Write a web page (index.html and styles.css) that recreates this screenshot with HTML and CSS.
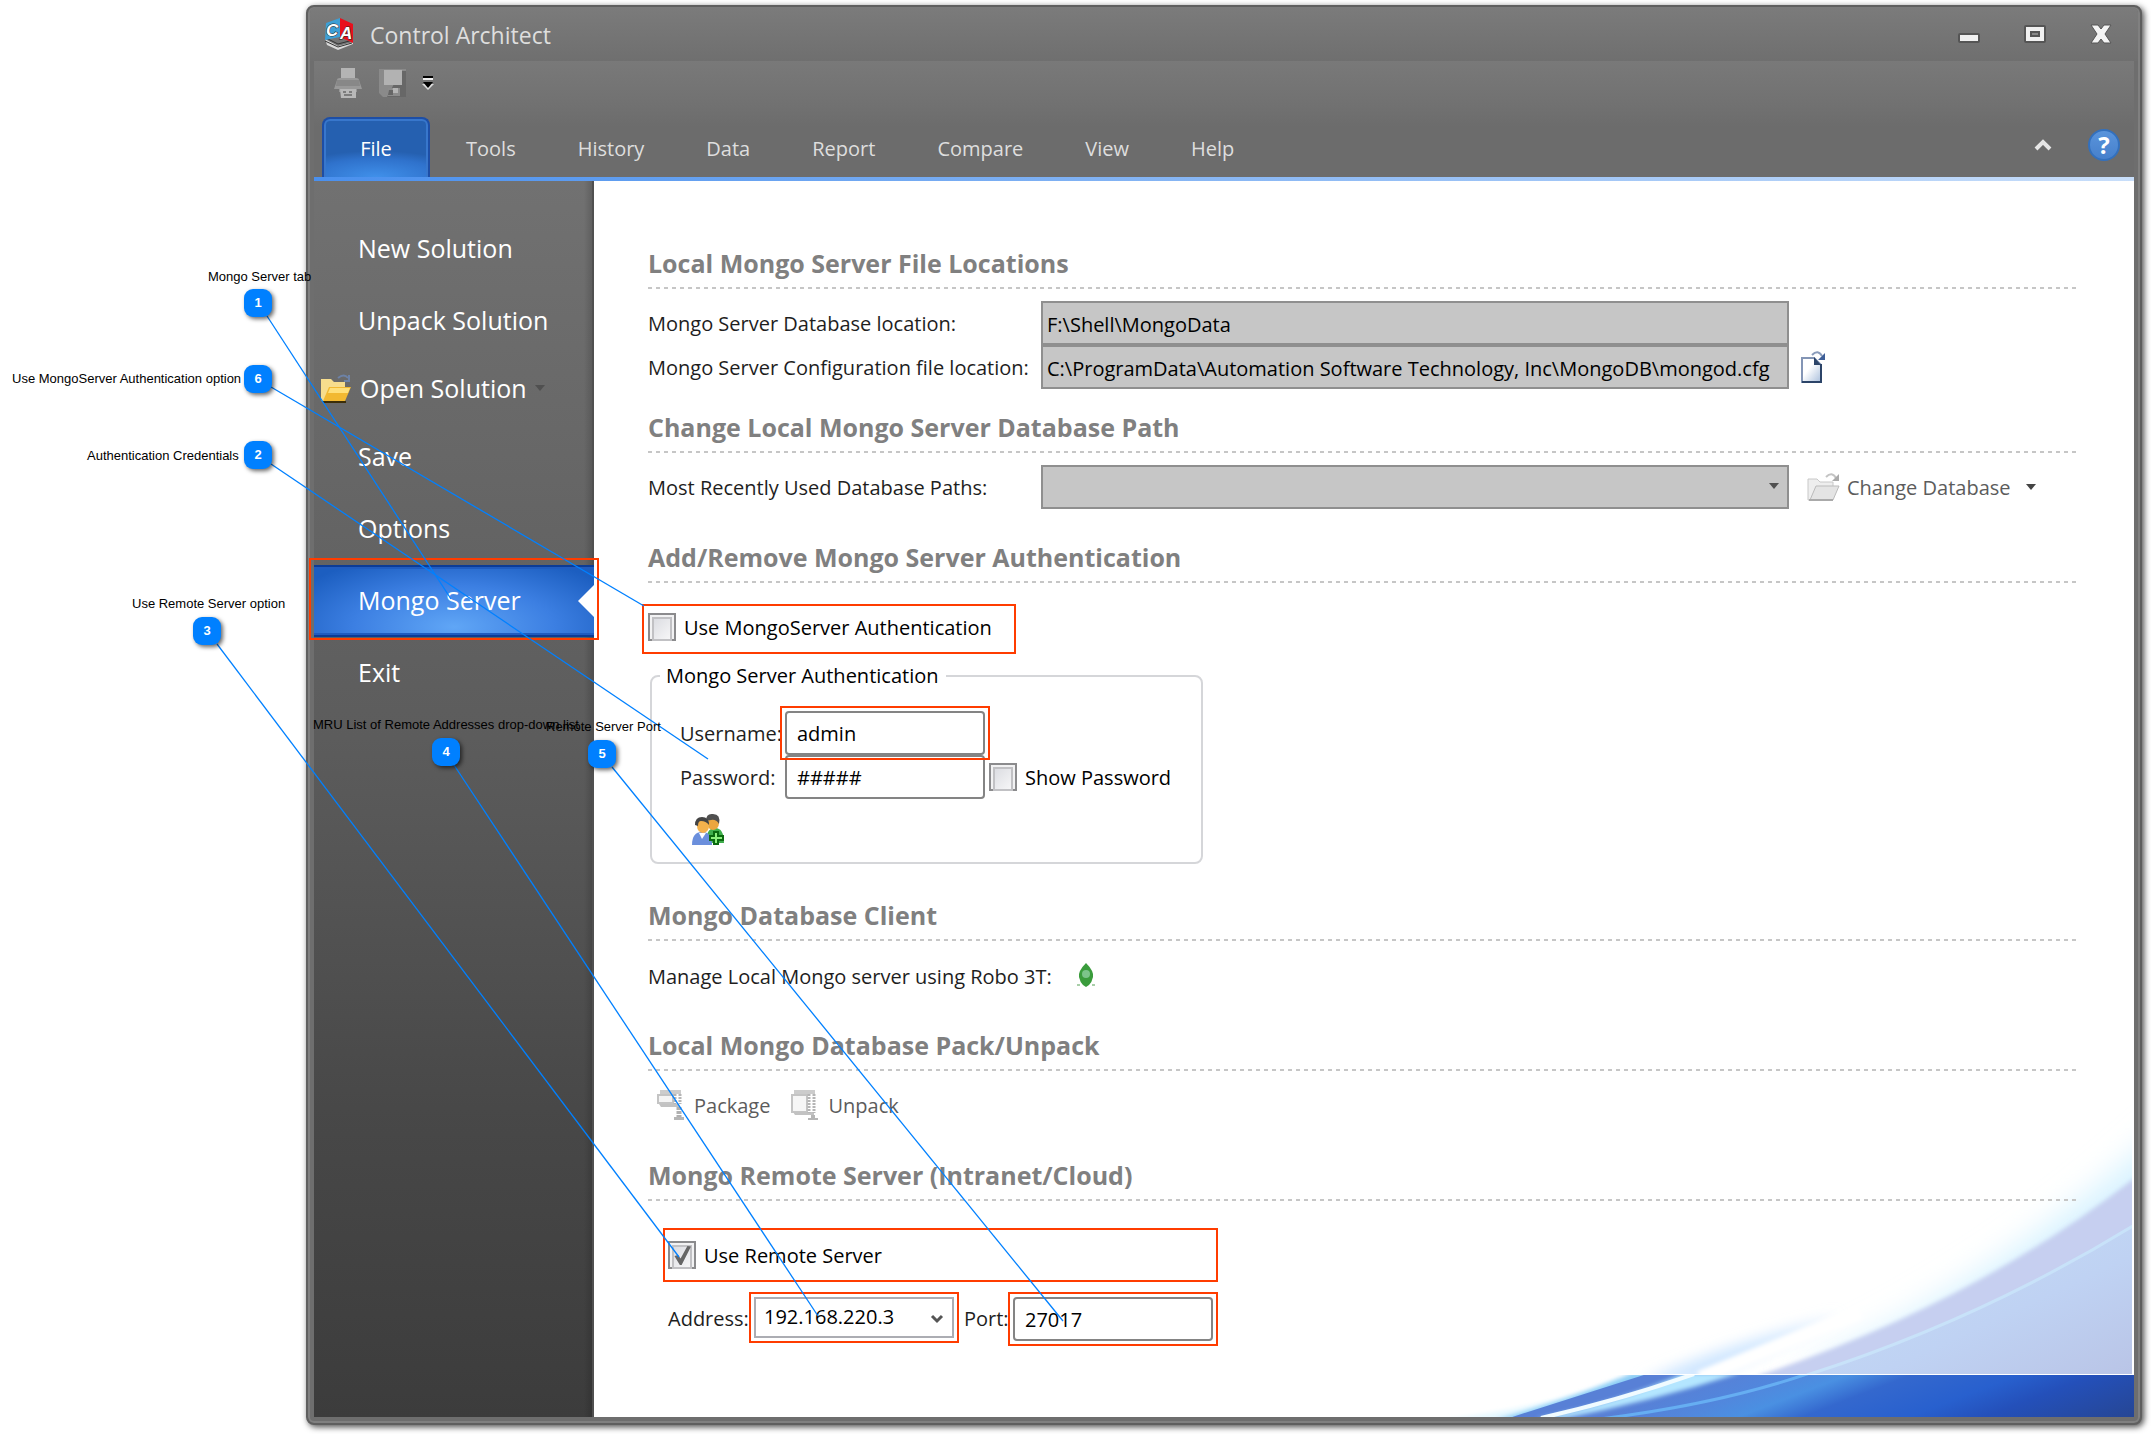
FILE: index.html
```html
<!DOCTYPE html>
<html lang="en">
<head>
<meta charset="utf-8">
<title>Control Architect</title>
<link rel="stylesheet" href="styles.css">
</head>
<body>
<div class="window">
  <header class="titlebar">
    <svg class="app-icon" width="30" height="32" viewBox="0 0 30 32" aria-hidden="true">
      <path d="M1 21 L14 28 L29 24 L29 26 L14 32 L3 27z" fill="#d9d9d9"/>
      <path d="M1 23l13 6 14-4M2 20l12 6 15-4" stroke="#333" stroke-width="1" fill="none"/>
      <path d="M2 5 L16 0 L16 19 L1 22z" fill="#3d9fd6"/>
      <path d="M16 0 L29 6 L29 25 L16 19z" fill="#e8101c"/>
      <text class="logo-letter" x="2" y="18">C</text>
      <text class="logo-letter" x="16" y="21">A</text>
    </svg>
    <h1 class="app-title">Control Architect</h1>
    <div class="window-buttons">
      <button class="window-button" aria-label="Minimize"><svg width="22" height="20" viewBox="0 0 22 20"><rect x="1" y="10" width="20" height="8" rx="1" fill="#f0f0f0" stroke="#555" stroke-width="2"/></svg></button>
      <button class="window-button" aria-label="Maximize"><svg width="22" height="20" viewBox="0 0 22 20"><rect x="1" y="2" width="20" height="16" rx="1" fill="#f0f0f0" stroke="#555" stroke-width="2"/><rect x="7" y="8" width="8" height="4" fill="#888" stroke="#555" stroke-width="2"/></svg></button>
      <button class="window-button" aria-label="Close"><svg width="22" height="20" viewBox="0 0 22 20"><path d="M1 1h7l3 4 3-4h7l-6 9 6 9h-7l-3-4-3 4H1l6-9z" fill="#f4f4f4" stroke="#555" stroke-width="1" stroke-linejoin="round"/></svg></button>
    </div>
  </header>

  <div class="quick-access">
    <button class="quick-button" aria-label="Print"><svg width="32" height="32" viewBox="0 0 32 32"><path d="M9 1h14v11H9z" fill="#b4b4b4"/><path d="M5 13q0-2 3-2h16q3 0 3 2l3 9h-5v3H7v-3H2z" fill="#999"/><path d="M5 13h22l1 6H4z" fill="#888"/><path d="M8 22h16v9H9z" fill="#b8b8b8"/><path d="M11 24h3v2h-3zM17 24h3v2h-3zM12 27h8v2h-8z" fill="#7c7c7c"/></svg></button>
    <button class="quick-button" aria-label="Save"><svg width="30" height="30" viewBox="0 0 30 30"><path d="M1 1h27v28H5l-4-4z" fill="#8a8a8a"/><path d="M23 3h5v26H9z" fill="#676767"/><path d="M6 2h18v15H6z" fill="#b2b2b2"/><path d="M10 20h12v8H10z" fill="#8c8c8c"/><path d="M15 20h5v5h-6z" fill="#b4b4b4"/><path d="M11 22h4v5h-5z" fill="#666"/></svg></button>
    <button class="quick-button" aria-label="Customize toolbar"><svg width="12" height="16" viewBox="0 0 12 16"><path d="M1 1h10v2H1z" fill="#000"/><path d="M1 3h10v2H1z" fill="#eee"/><path d="M0 9h12l-6 6z" fill="#ddd"/><path d="M1 7h10l-5 6z" fill="#000"/></svg></button>
  </div>

  <nav class="ribbon">
    <button class="tab tab-active">File</button>
    <button class="tab">Tools</button>
    <button class="tab">History</button>
    <button class="tab">Data</button>
    <button class="tab">Report</button>
    <button class="tab">Compare</button>
    <button class="tab">View</button>
    <button class="tab">Help</button>
    <div class="ribbon-tools">
      <button class="ribbon-tool" aria-label="Collapse ribbon"><svg width="18" height="12" viewBox="0 0 18 12"><path d="M2 10l7-7 7 7" fill="none" stroke="#e6e6e6" stroke-width="4"/></svg></button>
      <button class="help-button" aria-label="Help topics">?</button>
    </div>
  </nav>

  <div class="backstage">
    <nav class="sidebar">
      <button class="menu-item">New Solution</button>
      <button class="menu-item">Unpack Solution</button>
      <button class="menu-item menu-item-icon">
        <svg width="32" height="30" viewBox="0 0 32 30" aria-hidden="true"><path d="M18 5q6-5 10 0M29 2v6h-5" fill="none" stroke="#6d82a6" stroke-width="2"/><path d="M1 6h10l3 3h11v6L6 28H1z" fill="#f7dd8d"/><path d="M9 14h22l-6 14H3z" fill="#f2b932"/><path d="M10 15h20l-2 5H8z" fill="#ffe07a"/><path d="M3 28h23v2H3z" fill="#3b2d08"/></svg>
        <span>Open Solution</span>
        <svg width="10" height="6" viewBox="0 0 10 6" aria-hidden="true"><path d="M0 0h10L5 6z" fill="#505050"/></svg>
      </button>
      <button class="menu-item">Save</button>
      <button class="menu-item">Options</button>
      <button class="menu-item menu-item-active">Mongo Server</button>
      <button class="menu-item">Exit</button>
    </nav>

    <main class="page">
      <svg class="swoosh" width="740" height="297" viewBox="1394 1120 740 297" aria-hidden="true">
        <defs>
          <linearGradient id="pale" x1="0" y1="0" x2="1" y2="1"><stop offset="0" stop-color="#c6dff6"/><stop offset=".6" stop-color="#bfd2f3"/><stop offset="1" stop-color="#b9c4e6"/></linearGradient>
          <linearGradient id="deep" gradientUnits="userSpaceOnUse" x1="1600" y1="1417" x2="1669" y2="1596"><stop offset="0" stop-color="#5880d6"/><stop offset=".14" stop-color="#5286dc"/><stop offset=".26" stop-color="#4a90e2"/><stop offset=".38" stop-color="#3468ce"/><stop offset=".58" stop-color="#2860ce"/><stop offset=".72" stop-color="#2450ba"/><stop offset="1" stop-color="#264694"/></linearGradient>
          <filter id="glow" x="-20%" y="-50%" width="140%" height="200%"><feGaussianBlur stdDeviation="16"/></filter>
          <filter id="haze" x="-20%" y="-50%" width="140%" height="200%"><feGaussianBlur stdDeviation="7"/></filter>
          <filter id="soft" x="-10%" y="-50%" width="120%" height="200%"><feGaussianBlur stdDeviation="2"/></filter>
          <clipPath id="upper"><rect x="1394" y="1100" width="738" height="274"/></clipPath>
          <clipPath id="lower"><rect x="1394" y="1375" width="740" height="42"/></clipPath>
        </defs>
        <g clip-path="url(#upper)">
          <path d="M1790 1374Q1990 1290 2170 1125V1374z" fill="#d6f2ff" filter="url(#glow)"/>
          <path d="M1640 1382Q1720 1345 1840 1316L1700 1382z" fill="#cfe6ff" filter="url(#haze)"/>
          <path d="M1700 1378L1860 1312" stroke="#fff" stroke-width="14" filter="url(#soft)"/>
          <path d="M1760 1375Q1974 1303 2132 1180L2150 1166V1390H1740z" fill="#c6cff0" filter="url(#soft)"/>
          <path d="M1807 1375Q1980 1320 2136 1224V1376z" fill="url(#pale)"/>
          <path d="M1807 1375Q1980 1320 2136 1224" fill="none" stroke="#c8e2f9" stroke-width="3"/>
        </g>
        <g clip-path="url(#lower)">
          <path d="M1440 1420Q1560 1405 1620 1378L1600 1420z" fill="#e6f8ff" filter="url(#soft)"/>
          <path d="M1494 1420Q1580 1396 1632 1373H2136V1420z" fill="#8ccdf6" filter="url(#soft)"/>
          <path d="M1506 1419L1650 1373H2134V1419z" fill="url(#deep)"/>
          <path d="M1536 1419Q1620 1402 1684 1373L1740 1373Q1650 1402 1560 1419z" fill="#b4e6ff" filter="url(#soft)"/>
          <path d="M1541 1418Q1620 1400 1694 1374" fill="none" stroke="#f0fbff" stroke-width="4"/>
          <path d="M1600 1419Q1720 1404 1810 1373" fill="none" stroke="#66aef2" stroke-width="3"/>
        </g>
      </svg>

      <section class="section">
        <h2 class="section-title">Local Mongo Server File Locations</h2>
        <div class="field-row">
          <label class="field-label" for="db-location">Mongo Server Database location:</label>
          <input class="path-field" id="db-location" value="F:\Shell\MongoData" readonly>
        </div>
        <div class="field-row">
          <label class="field-label" for="cfg-location">Mongo Server Configuration file location:</label>
          <input class="path-field" id="cfg-location" value="C:\ProgramData\Automation Software Technology, Inc\MongoDB\mongod.cfg" readonly>
          <button class="icon-button" aria-label="Open configuration file"><svg width="26" height="34" viewBox="0 0 26 34"><defs><linearGradient id="sheet" x1="0" y1="0" x2="1" y2="1"><stop offset=".4" stop-color="#fff"/><stop offset="1" stop-color="#a9bfdc"/></linearGradient></defs><path d="M1 8h12l7 7v17H1z" fill="url(#sheet)" stroke="#8395b5" stroke-width="2"/><path d="M20 14v18H1" fill="none" stroke="#2c4468" stroke-width="2"/><path d="M13 7v8h7z" fill="#2c4468"/><path d="M11 5q6-6 10 1" fill="none" stroke="#8a9cbb" stroke-width="2"/><path d="M24 3v7h-7z" fill="#3f5f98"/></svg></button>
        </div>
      </section>

      <section class="section">
        <h2 class="section-title">Change Local Mongo Server Database Path</h2>
        <div class="field-row">
          <label class="field-label" for="recent-paths">Most Recently Used Database Paths:</label>
          <span class="select-box">
            <select class="path-field" id="recent-paths"><option></option></select>
            <svg class="select-arrow" width="10" height="6" viewBox="0 0 10 6" aria-hidden="true"><path d="M0 0h10L5 6z" fill="#505050"/></svg>
          </span>
          <button class="text-button change-button">
            <svg width="34" height="30" viewBox="0 0 34 30" aria-hidden="true"><path d="M1 7h9l3 3h13v7L4 28H1z" fill="#eee" stroke="#c8c8c8"/><path d="M9 14h23l-6 14H3z" fill="#e4e4e4" stroke="#bbb"/><path d="M2 28h24" stroke="#aaa" stroke-width="2"/><path d="M19 5q6-6 10 1" fill="none" stroke="#c4c4c4" stroke-width="2"/><path d="M32 2v7h-7z" fill="#aaa"/></svg>
            <span>Change Database</span>
            <svg width="10" height="6" viewBox="0 0 10 6" aria-hidden="true"><path d="M0 0h10L5 6z" fill="#444"/></svg>
          </button>
        </div>
      </section>

      <section class="section">
        <h2 class="section-title">Add/Remove Mongo Server Authentication</h2>
        <div class="check-row use-auth">
          <input class="check" type="checkbox" id="use-auth"><label for="use-auth">Use MongoServer Authentication</label>
        </div>
        <fieldset class="credentials">
          <legend class="credentials-title">Mongo Server Authentication</legend>
          <div class="field-row">
            <label class="credential-label" for="username">Username:</label>
            <input class="text-field" id="username" value="admin">
          </div>
          <div class="field-row">
            <label class="credential-label" for="password">Password:</label>
            <input class="text-field" id="password" value="#####">
            <div class="check-row show-password">
              <input class="check" type="checkbox" id="show-password"><label for="show-password">Show Password</label>
            </div>
          </div>
          <button class="icon-button add-user" aria-label="Add user"><svg width="34" height="34" viewBox="0 0 34 34"><path d="M15 30q0-15 9-15t9 15z" fill="#3fae4c"/><ellipse cx="22" cy="10" rx="6" ry="7" fill="#eba63e"/><path d="M15 8q0-8 7-7 8 0 6 10-3-5-8-4z" fill="#505050"/><path d="M1 32q0-13 10-13t10 13z" fill="#6b8fdc"/><path d="M8 20l3 6 4-6z" fill="#fff"/><ellipse cx="12" cy="13" rx="6" ry="7" fill="#f5b24c"/><path d="M4 12q0-8 7-8t7 8q-3-4-8-4-3 0-3 5z" fill="#444"/><path d="M22 18h6v4h5v6h-5v4h-6v-4h-4v-6h4z" fill="#0b6a10"/><path d="M24 20h2v4h5v2h-5v4h-2v-4h-4v-2h4z" fill="#8df07c"/></svg></button>
        </fieldset>
      </section>

      <section class="section">
        <h2 class="section-title">Mongo Database Client</h2>
        <div class="client-row">
          <span>Manage Local Mongo server using Robo 3T:</span>
          <button class="icon-button robo-button" aria-label="Open Robo 3T"><svg width="20" height="24" viewBox="0 0 20 24"><path d="M10 0q8 8 7 14-1 5-4 8l-3 2-3-2q-3-3-4-8-1-6 7-14z" fill="#3a9c3c"/><circle cx="10" cy="11" r="4" fill="#7cc48a"/><path d="M1 21h3v2H1zM16 21h3v2h-3z" fill="#a9cfa9"/></svg></button>
        </div>
      </section>

      <section class="section">
        <h2 class="section-title">Local Mongo Database Pack/Unpack</h2>
        <div class="pack-row">
          <button class="text-button pack-button"><svg width="28" height="32" viewBox="0 0 28 32" aria-hidden="true"><path d="M4 1h21v4H4zM1 5h4v10H1z" fill="#ccc"/><path d="M2 6h15v8H2z" fill="#f4f4f4" stroke="#c4c4c4" stroke-width="2"/><path d="M3 15h20v3H5z" fill="#c2c2c2"/><path d="M19 5v10M24 5v10" stroke="#b5b5b5" stroke-width="3" stroke-dasharray="2 1"/><path d="M23 18v10" stroke="#b0b0b0" stroke-width="5" stroke-dasharray="3 1"/><path d="M18 28h10v3H18z" fill="#b5b5b5"/></svg><span>Package</span></button>
          <button class="text-button pack-button"><svg width="28" height="32" viewBox="0 0 28 32" aria-hidden="true"><path d="M4 1h21v4H4z" fill="#ccc"/><path d="M2 6h15v17H2z" fill="#f6f6f6" stroke="#c4c4c4" stroke-width="2"/><path d="M3 23h21v3H5z" fill="#c2c2c2"/><path d="M19 5v19M24 5v19" stroke="#b5b5b5" stroke-width="3" stroke-dasharray="2 1"/><path d="M21 26h4v3h3v2H18v-2h3z" fill="#b5b5b5"/></svg><span>Unpack</span></button>
        </div>
      </section>

      <section class="section">
        <h2 class="section-title">Mongo Remote Server (Intranet/Cloud)</h2>
        <div class="check-row use-remote">
          <input class="check" type="checkbox" id="use-remote" checked><label for="use-remote">Use Remote Server</label>
        </div>
        <div class="remote-row">
          <label class="address-label" for="address">Address:</label>
          <span class="select-box">
            <select class="address-field" id="address"><option>192.168.220.3</option></select>
            <svg class="select-arrow" width="14" height="10" viewBox="0 0 14 10" aria-hidden="true"><path d="M2 2l5 5 5-5" fill="none" stroke="#555" stroke-width="3"/></svg>
          </span>
          <label class="port-label" for="port">Port:</label>
          <input class="text-field" id="port" value="27017">
        </div>
      </section>
    </main>
  </div>
</div>

<div class="annotations">
  <svg class="leaders" width="1300" height="1400" viewBox="0 0 1300 1400" aria-hidden="true">
    <g fill="none" stroke="#ff3c00" stroke-width="2">
      <rect x="310" y="559" width="288" height="80"/>
      <rect x="643" y="605" width="372" height="48"/>
      <rect x="781" y="707" width="208" height="52"/>
      <rect x="664" y="1229" width="553" height="52"/>
      <rect x="750" y="1293" width="208" height="49"/>
      <rect x="1009" y="1293" width="208" height="52"/>
    </g>
    <g stroke="#0080ff" stroke-width="1.3">
      <path d="M267 316L451 599"/>
      <path d="M271 387L644 606"/>
      <path d="M271 464L708 759"/>
      <path d="M217 644L679 1257"/>
      <path d="M454 765L818 1316"/>
      <path d="M612 767L1063 1321"/>
    </g>
  </svg>
  <span class="badge badge-1">1</span><span class="note note-1">Mongo Server tab</span>
  <span class="badge badge-2">2</span><span class="note note-2">Authentication Credentials</span>
  <span class="badge badge-3">3</span><span class="note note-3">Use Remote Server option</span>
  <span class="badge badge-4">4</span><span class="note note-4">MRU List of Remote Addresses drop-down list</span>
  <span class="badge badge-5">5</span><span class="note note-5">Remote Server Port</span>
  <span class="badge badge-6">6</span><span class="note note-6">Use MongoServer Authentication option</span>
</div>
</body>
</html>
```
FILE: styles.css
```css
* { box-sizing: border-box; }

body {
  position: relative;
  margin: 0;
  padding: 5px 9px 9px 306px;
  background: #fff;
  color: #1e1e1e;
  font: 20px/28px "Open Sans", "Noto Sans", sans-serif;
}

button {
  padding: 0;
  border: 0;
  background: none;
  color: inherit;
  font: inherit;
  text-align: left;
}

button svg { display: block; flex: none; }
input, select { margin: 0; font: inherit; color: #000; }

/* Window frame */
.window {
  display: flex;
  flex-direction: column;
  min-height: calc(100vh - 14px);
  padding: 0 6px 6px;
  border: 2px solid #5f5f5f;
  border-radius: 8px;
  background: #6e6e6e;
  box-shadow: inset 0 0 0 2px #808080, 2px 2px 6px rgba(0, 0, 0, .7);
}

.titlebar {
  display: flex;
  align-items: center;
  height: 54px;
  margin: 0 -4px;
  padding: 0 26px 0 14px;
  background: linear-gradient(#7b7b7b, #6f6f6f);
  border-radius: 6px 6px 0 0;
}

.app-title {
  margin: 0 0 0 16px;
  padding-top: 2px;
  color: #dedede;
  font-size: 23px;
  font-weight: 400;
}

.logo-letter { font: italic 700 17px "Liberation Sans", sans-serif; fill: #fff; stroke: #222; stroke-width: 1px; paint-order: stroke; }
.window-buttons { display: flex; gap: 44px; margin-left: auto; }

.quick-access {
  display: flex;
  align-items: center;
  gap: 14px;
  height: 44px;
  padding-left: 18px;
  background: linear-gradient(#797979, #717171);
}

/* Ribbon tabs */
.ribbon {
  display: flex;
  align-items: flex-end;
  height: 76px;
  padding: 12px 14px 0 8px;
  border-bottom: 4px solid;
  border-image: linear-gradient(90deg, #4a90ee, #c8defa) 1;
  background: linear-gradient(#717171, #6c6c6c 30%);
  color: #dedede;
}

.tab { height: 60px; padding: 4px 31px 0; text-align: center; }

.tab-active {
  width: 108px;
  margin-right: 5px;
  padding: 2px 0 0;
  border: 2px solid #1d4ea6;
  border-bottom: 0;
  border-radius: 8px 8px 0 0;
  background: radial-gradient(ellipse 90% 45% at 50% 100%, #4090ea, #2f72cc 70%, transparent), #2560b0;
  box-shadow: inset 0 2px 0 #3877cc, inset 2px 0 0 #3877cc, inset -2px 0 0 #3877cc;
  color: #fff;
}

.ribbon-tools { display: flex; align-items: center; gap: 36px; height: 32px; margin: 0 0 16px auto; }

.help-button {
  width: 32px;
  height: 32px;
  border: 2px solid #3370bd;
  border-radius: 50%;
  background: linear-gradient(#5a94db, #4680cc);
  color: #fff;
  font-size: 24px;
  font-weight: 700;
  text-align: center;
}

/* Backstage */
.backstage { display: flex; flex: 1; }

.sidebar {
  flex: none;
  width: 280px;
  padding-top: 32px;
  background: linear-gradient(90deg, transparent 270px, rgba(0, 0, 0, .18)), linear-gradient(#717171, #686868 20%, #5c5c5c 45%, #484848 75%, #3c3c3c);
  box-shadow: inset -2px 0 0 #505050;
  color: #fff;
  font-size: 25px;
}

.menu-item { display: flex; align-items: center; width: 100%; height: 72px; padding: 0 0 2px 44px; }
.menu-item-icon { gap: 8px; height: 64px; padding-left: 6px; }

.menu-item-active {
  position: relative;
  border: solid #0c3c96;
  border-width: 2px 0;
  background: radial-gradient(ellipse 65% 110% at 50% 88%, #60a6f6, #3c7fe2 55%, #1c5ec0);
  box-shadow: inset 0 2px 0 #205cc0, inset 0 -2px 0 #205cc0;
}

.menu-item-active::after {
  content: "";
  position: absolute;
  top: 18px;
  right: 0;
  width: 16px;
  height: 32px;
  background: #fff;
  clip-path: polygon(100% 0, 100% 100%, 0 50%);
}

.page { position: relative; flex: 1; padding: 66px 57px 0 54px; background: #fff; }
.swoosh { position: absolute; right: 0; bottom: 0; overflow: visible; }

.section { position: relative; min-height: 130px; padding-bottom: 22px; }

.section-title {
  height: 42px;
  margin: 0 0 12px;
  color: #808080;
  font-size: 25px;
  font-weight: 700;
  line-height: 32px;
  background: repeating-linear-gradient(90deg, #c6c6c6 0 4px, transparent 4px 8px) left bottom / 100% 2px no-repeat;
}

/* Fields */
.field-row { display: flex; align-items: center; height: 44px; }
.field-label { flex: none; width: 393px; padding-top: 2px; white-space: nowrap; }

.path-field {
  width: 748px;
  height: 44px;
  padding: 2px 4px 0;
  border: 2px solid #8f8f8f;
  border-radius: 0;
  background: #c6c6c6;
}

.text-field {
  width: 200px;
  height: 44px;
  padding: 0 10px;
  border: 2px solid #848484;
  border-radius: 4px;
  background: #fff;
}

select { appearance: none; }
.select-box { position: relative; display: flex; }
.select-arrow { position: absolute; top: 50%; right: 10px; margin-top: -4px; pointer-events: none; }
.address-field { width: 200px; height: 41px; padding: 0 10px 2px 8px; border: 2px solid #acadb3; border-radius: 0; background: #fff; }

.icon-button { margin-left: 12px; }
.text-button { display: flex; align-items: center; color: #5c5c5c; }
.text-button span { padding-top: 2px; }
.change-button { gap: 6px; margin-left: 18px; }
.change-button svg:last-child { margin-left: 9px; }

.check-row { display: flex; align-items: center; height: 28px; gap: 8px; color: #000; }
.check-row label { padding-top: 2px; }
.use-auth { margin-top: 30px; }
.use-remote { margin: 40px 0 28px 20px; }
.show-password { margin-left: 4px; }

.check {
  appearance: none;
  position: relative;
  flex: none;
  width: 28px;
  height: 28px;
  padding: 2px;
  border: 2px solid #8b8b8d;
  background: #f2f2f3;
}

.check::before {
  content: "";
  display: block;
  height: 20px;
  border: 2px solid #c1c1c4;
  background: linear-gradient(135deg, #dcdde2, #f6f6f7);
}

.check:checked::after {
  content: "";
  position: absolute;
  inset: 2px 3px;
  background: #666;
  clip-path: polygon(8% 55%, 28% 50%, 42% 68%, 80% 5%, 100% 8%, 48% 100%, 38% 100%);
}

.credentials {
  width: 553px;
  margin: 21px 0 13px 2px;
  padding: 21px 0 15px 28px;
  border: 2px solid #d5d6d9;
  border-radius: 8px;
}

.credentials-title { margin-left: -20px; padding: 0 8px 0 6px; color: #000; }
.credential-label { flex: none; width: 105px; padding-top: 2px; }
.add-user { display: block; margin: 14px 0 2px 11px; height: 32px; }

.client-row { display: flex; align-items: center; height: 28px; margin-top: 22px; }
.robo-button { margin: 0 0 4px 24px; }
.pack-row { display: flex; gap: 20px; margin: 18px 0 0 8px; }
.pack-button { gap: 10px; height: 32px; }

.remote-row { display: flex; align-items: flex-start; margin-left: 20px; }
.address-label { width: 86px; line-height: 44px; }
.port-label { width: 59px; padding-left: 10px; line-height: 44px; }

/* Numbered call-outs laid over the window */
.annotations { position: absolute; top: 0; left: 0; pointer-events: none; }
.leaders { position: absolute; top: 0; left: 0; }

.badge {
  position: absolute;
  width: 28px;
  height: 28px;
  border-radius: 9px;
  background: #0080ff;
  box-shadow: 2px 2px 4px rgba(0, 0, 0, .6);
  color: #fff;
  font: 700 13px/28px "Liberation Sans", sans-serif;
  text-align: center;
}

.note {
  position: absolute;
  color: #000;
  font: 13px/16px "Liberation Sans", sans-serif;
  white-space: nowrap;
}

.badge-1 { left: 244px; top: 289px; }
.badge-2 { left: 244px; top: 441px; }
.badge-3 { left: 193px; top: 617px; }
.badge-4 { left: 432px; top: 738px; }
.badge-5 { left: 588px; top: 740px; }
.badge-6 { left: 244px; top: 365px; }
.note-1 { left: 208px; top: 269px; }
.note-2 { left: 87px; top: 448px; }
.note-3 { left: 132px; top: 596px; }
.note-4 { left: 313px; top: 717px; }
.note-5 { left: 546px; top: 719px; }
.note-6 { left: 12px; top: 371px; }
```
